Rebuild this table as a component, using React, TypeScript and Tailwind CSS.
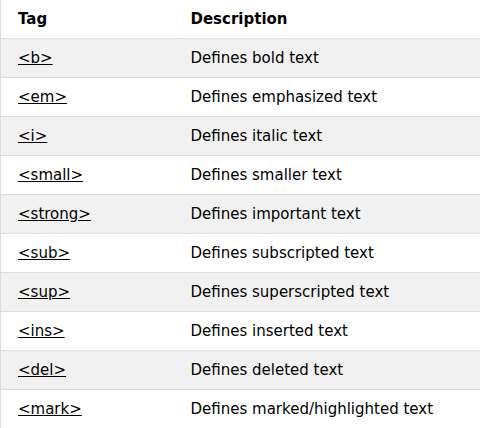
import React from 'react';

const rows: [string, string][] = [
  ['<b>', 'Defines bold text'],
  ['<em>', 'Defines emphasized text'],
  ['<i>', 'Defines italic text'],
  ['<small>', 'Defines smaller text'],
  ['<strong>', 'Defines important text'],
  ['<sub>', 'Defines subscripted text'],
  ['<sup>', 'Defines superscripted text'],
  ['<ins>', 'Defines inserted text'],
  ['<del>', 'Defines deleted text'],
  ['<mark>', 'Defines marked/highlighted text'],
];

export default function App() {
  return (
    <div className="w-[480px] h-[428px] overflow-hidden bg-white font-['DejaVu_Sans',Verdana,sans-serif] text-[15px] leading-[22px] text-black">
      <table className="w-[481px] border-collapse border-l border-[#dddddd]">
        <thead>
          <tr className="border-b border-[#dddddd] h-[38px]">
            <th className="w-[182px] pl-[17px] pr-2 text-left font-bold">Tag</th>
            <th className="pl-2 text-left font-bold">Description</th>
          </tr>
        </thead>
        <tbody>
          {rows.map(([tag, desc], i) => (
            <tr
              key={tag}
              className={`border-b border-[#dddddd] h-[39px] ${i % 2 === 0 ? 'bg-[#f1f1f1]' : 'bg-white'}`}
            >
              <td className="pl-[17px] pr-2">
                <a href="#" className="underline text-black">{tag}</a>
              </td>
              <td className="pl-2">{desc}</td>
            </tr>
          ))}
        </tbody>
      </table>
    </div>
  );
}
